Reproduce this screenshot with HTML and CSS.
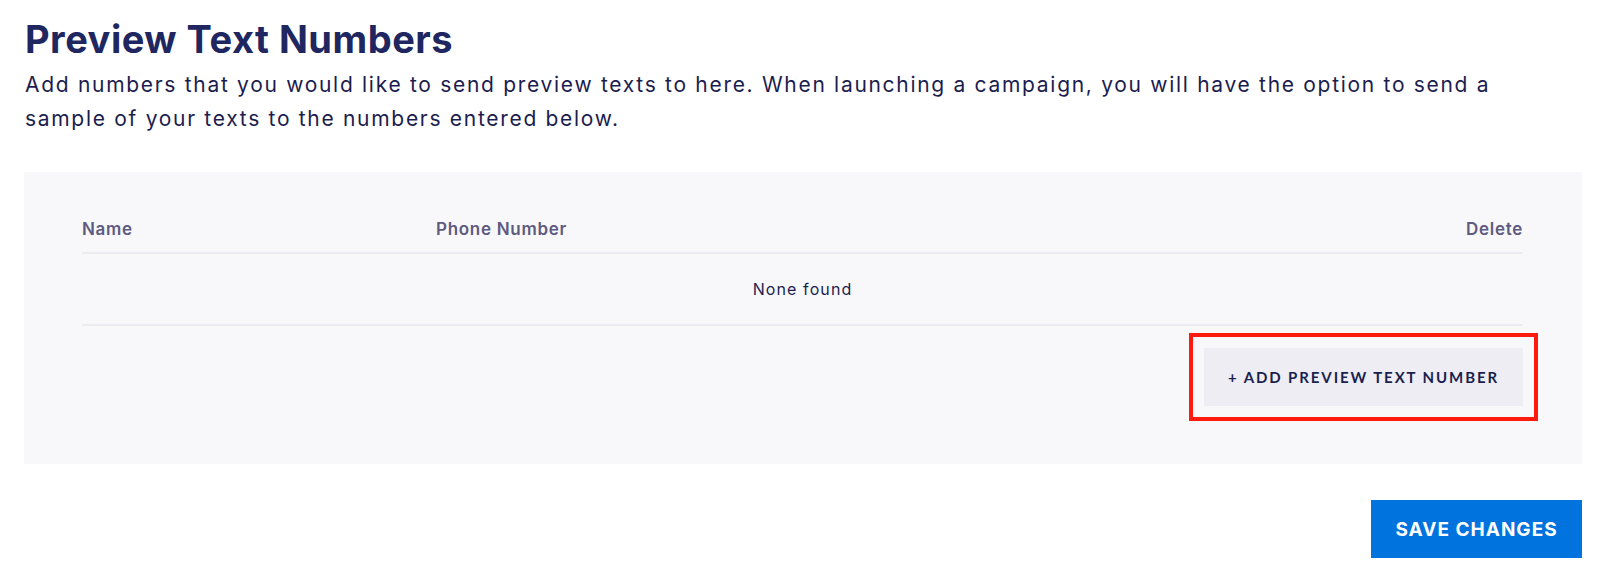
FILE: index.html
```html
<!DOCTYPE html>
<html lang="en">
<head>
<meta charset="utf-8">
<title>Preview Text Numbers</title>
<link rel="stylesheet" href="styles.css">
</head>
<body>
<main class="page">
  <h1 class="title">Preview Text Numbers</h1>
  <p class="desc">Add numbers that you would like to send preview texts to here. When launching a campaign, you will have the option to send a sample of your texts to the numbers entered below.</p>
  <section class="panel">
    <div class="table">
      <div class="thead">
        <span class="col-name">Name</span>
        <span class="col-phone">Phone Number</span>
        <span class="col-del">Delete</span>
      </div>
      <div class="empty">None found</div>
    </div>
    <div class="panel-actions">
      <button class="btn-add" type="button">+ ADD PREVIEW TEXT NUMBER</button>
    </div>
  </section>
  <div class="footer">
    <button class="btn-save" type="button">SAVE CHANGES</button>
  </div>
</main>
</body>
</html>
```
FILE: styles.css
```css
html, body {
  margin: 0;
  padding: 0;
  background: #ffffff;
}

body {
  font-family: Inter, "Noto Sans", "Liberation Sans", sans-serif;
  color: #1c1d4f;
}

.page {
  padding: 0 18px 0 24px;
}

.title {
  margin: 0;
  padding-top: 15px;
  padding-left: 1px;
  font-size: 38px;
  line-height: 48px;
  font-weight: 700;
  letter-spacing: 0.5px;
  color: #202760;
}

.desc {
  margin: 5px 0 0 0;
  max-width: 1500px;
  font-size: 21px;
  line-height: 34px;
  font-weight: 400;
  letter-spacing: 1.7px;
  color: #1c1d4f;
  padding-left: 1px;
}

.panel {
  margin-top: 36px;
  background: #f8f8fb;
  padding: 45px 59px 58px 58px;
}

.thead {
  display: grid;
  grid-template-columns: 354px 1fr auto;
  font-size: 17px;
  line-height: 24px;
  font-weight: 600;
  letter-spacing: 0.7px;
  color: #5e5a80;
  padding-bottom: 11px;
  border-bottom: 2px solid #ebebf1;
}

.col-del {
  text-align: right;
}

.empty {
  display: flex;
  align-items: center;
  justify-content: center;
  height: 70px;
  font-size: 16px;
  letter-spacing: 1.1px;
  color: #1c1d4f;
  border-bottom: 2px solid #ebebf1;
}

.panel-actions {
  display: flex;
  justify-content: flex-end;
  margin-top: 22px;
}

.btn-add {
  height: 58px;
  width: 319px;
  border: 0;
  background: #eeedf3;
  color: #1a1f4e;
  font-family: Lato, "Open Sans", sans-serif;
  font-weight: 700;
  font-size: 15px;
  letter-spacing: 1.9px;
  outline: 4px solid #ff1a0e;
  outline-offset: 11px;
  cursor: pointer;
}

.footer {
  display: flex;
  justify-content: flex-end;
  margin-top: 36px;
}

.btn-save {
  height: 58px;
  width: 211px;
  border: 0;
  background: #0073df;
  color: #ffffff;
  font-family: Inter, "Noto Sans", sans-serif;
  font-weight: 700;
  font-size: 19px;
  letter-spacing: 1px;
  cursor: pointer;
}
```
